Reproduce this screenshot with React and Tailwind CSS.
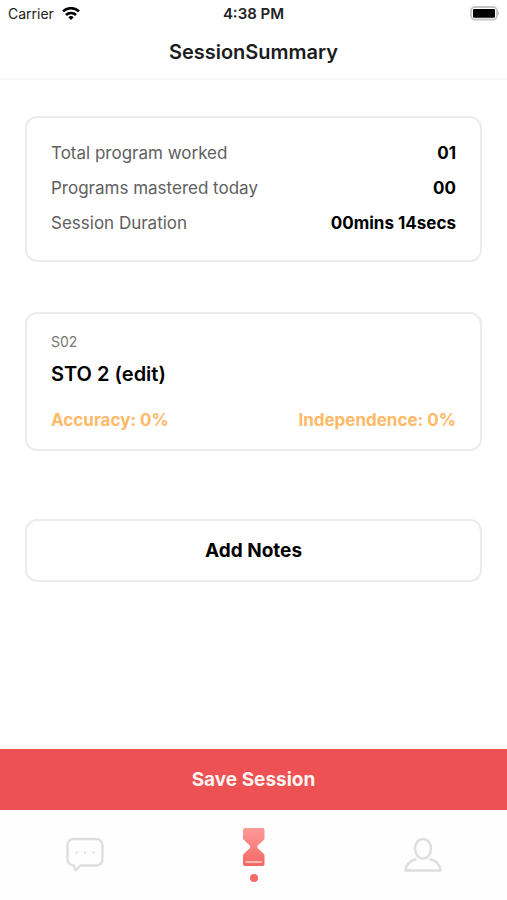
import React from 'react';

const totals = [
  { label: 'Total program worked', value: '01' },
  { label: 'Programs mastered today', value: '00' },
  { label: 'Session Duration', value: '00mins 14secs' },
];

function StatusBar() {
  return (
    <div className="grid grid-cols-3 items-center h-7 px-2 text-sm text-[#222222]">
      <div className="flex items-center gap-2">
        <span>Carrier</span>
        <svg width="18" height="14" viewBox="0 0 18 14" fill="none" stroke="#000000" strokeWidth="2.6">
          <path d="M1 4.400a11.600 11.600 0 0 1 16 0" />
          <path d="M4 8a7.200 7.200 0 0 1 10 0" />
          <path d="M9 13l-2.700-2.800a3.900 3.900 0 0 1 5.400 0z" fill="#000000" stroke="none" />
        </svg>
      </div>
      <span className="text-center text-[15px] font-semibold">4:38 PM</span>
      <svg className="justify-self-end" width="30" height="16" viewBox="0 0 30 16">
        <rect x="2" y="1" width="26" height="12.500" rx="4" fill="#ffffff" stroke="#c4c4c4" strokeWidth="1.800" />
        <rect x="4" y="3" width="22" height="8.800" rx="1.200" fill="#000000" />
        <path d="M28.600 4.800c2 1 2 4 0 5z" fill="#bdbdbd" />
      </svg>
    </div>
  );
}

function Card({ children, className }) {
  return (
    <section className={`border-2 border-[#ececec] rounded-xl px-6 ${className}`}>
      {children}
    </section>
  );
}

function TabBar() {
  return (
    <nav className="grid grid-cols-3 h-[90px] shrink-0 bg-[#fefefe]">
      <a href="#messages" aria-label="Messages" className="flex items-center justify-center">
        <svg width="38" height="36" viewBox="0 0 38 36" fill="none" stroke="#dedede" strokeWidth="2.400">
          <path
            d="M7.500 2h23a6 6 0 0 1 6 6v14.500a6 6 0 0 1-6 6H14.500l-5 5-1.500-5h-.5a6 6 0 0 1-6-6V8a6 6 0 0 1 6-6z"
            strokeLinejoin="round"
          />
          <path d="M9.500 15.500h2M18 15.500h2M26.500 15.500h2" strokeWidth="2" />
        </svg>
      </a>
      <a href="#session" aria-label="Session" className="flex flex-col items-center pt-[18px] gap-2">
        <svg width="24" height="38" viewBox="0 0 24 38">
          <defs>
            <linearGradient id="sand" x1="0" y1="0" x2="0" y2="1">
              <stop offset="0" stopColor="#fc9a96" />
              <stop offset="0.500" stopColor="#f98280" />
              <stop offset="1" stopColor="#f26664" />
            </linearGradient>
          </defs>
          <path
            d="M3 0h17.500A2 2 0 0 1 22.500 2v8c0 1-.4 1.600-1.100 2.200L16 17.200c-1 1-1 2.200 0 3.200l5.400 5c.7.700 1.100 1.300 1.100 2.300V36a2 2 0 0 1-2 2H3a2 2 0 0 1-2-2v-8.300c0-1 .4-1.600 1.100-2.300l5.400-5c1-1 1-2.200 0-3.200l-5.400-5C1.400 11.600 1 11 1 10V2A2 2 0 0 1 3 0z"
            fill="url(#sand)"
          />
          <path d="M3.500 34h16.500" stroke="#ffb7b1" strokeWidth="2" />
        </svg>
        <span className="size-2 rounded-full bg-[#f76b66]" />
      </a>
      <a href="#profile" aria-label="Profile" className="flex items-center justify-center">
        <svg width="38" height="36" viewBox="0 0 38 36" fill="none" stroke="#dedede" strokeWidth="2.400">
          <ellipse cx="19" cy="11.800" rx="8" ry="9.800" />
          <path d="M12.500 22C6 23.500 2 27 1.500 33.500h35C36 27 32 23.500 25.500 22" strokeLinejoin="round" />
        </svg>
      </a>
    </nav>
  );
}

function App() {
  return (
    <div className="flex flex-col min-h-screen bg-white font-['Inter',sans-serif] text-black">
      {/* Header */}
      <header className="border-b-2 border-[#f6f6f6]">
        <StatusBar />
        <h1 className="h-[50px] pt-2 text-center text-xl leading-8 font-semibold text-[#1c1c1e]">
          SessionSummary
        </h1>
      </header>

      <main className="flex flex-col flex-grow px-[25px] pt-9">
        {/* Session totals */}
        <Card className="pt-[18px] pb-[19px]">
          <dl>
            {totals.map((item) => (
              <div key={item.label} className="flex justify-between h-[35px] items-center text-[17px]">
                <dt className="text-[#606060]">{item.label}</dt>
                <dd className="font-bold">{item.value}</dd>
              </div>
            ))}
          </dl>
        </Card>

        {/* Program result */}
        <Card className="mt-[50px] pt-4 pb-[17px]">
          <p className="text-sm leading-6 text-[#777777]">S02</p>
          <h2 className="mt-1 text-xl leading-8 font-semibold">STO 2 (edit)</h2>
          <div className="flex justify-between mt-[18px] text-[17px] leading-6 font-bold text-[#ffb967]">
            <span>Accuracy: 0%</span>
            <span>Independence: 0%</span>
          </div>
        </Card>

        <button
          type="button"
          className="mt-[68px] h-[63px] pt-0.5 border-2 border-[#ececec] rounded-xl text-[19px] font-bold"
        >
          Add Notes
        </button>
      </main>

      <button
        type="button"
        className="h-[61px] pt-0.5 shrink-0 bg-[#ed5153] text-[19px] font-bold text-[#fff3f0]"
      >
        Save Session
      </button>
      <TabBar />
    </div>
  );
}

export default App;
